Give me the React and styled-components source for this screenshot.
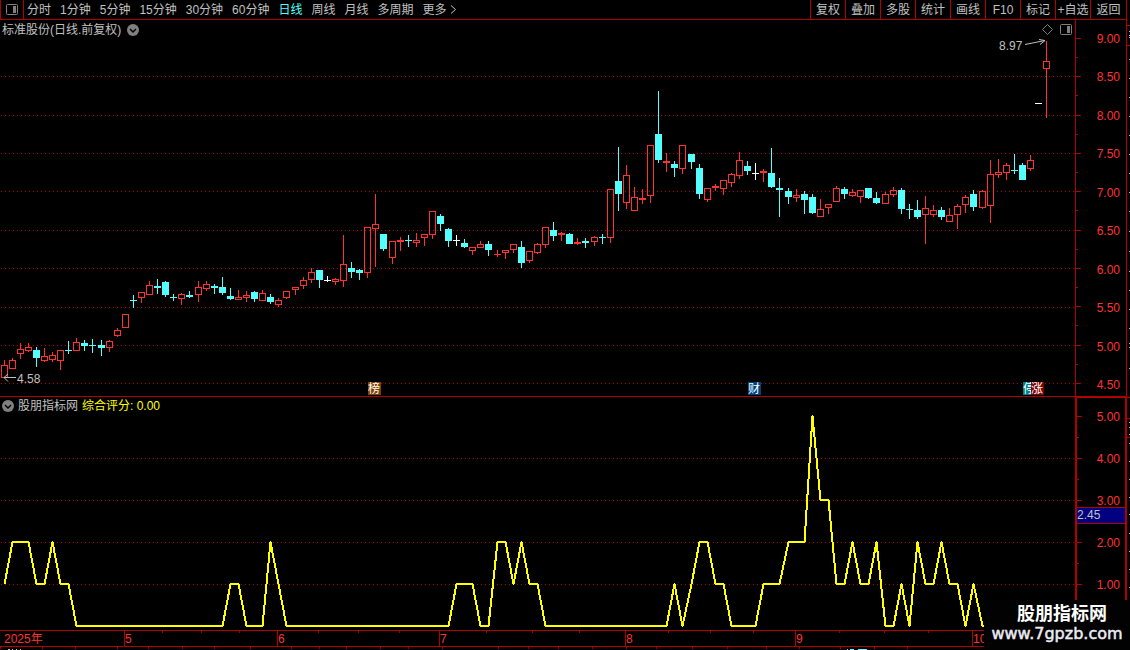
import React from 'react'
import styled, { createGlobalStyle, css } from 'styled-components'

const LINE = '#b00000'
const RED = '#ff3232'
const CYAN = '#54ffff'
const WHITE = '#ffffff'
const GREY = '#c0c0c0'

const GlobalStyle = createGlobalStyle`
* {
box-sizing: border-box;
}
body {
margin: 0;
background: #000;
color: ${GREY};
font-family: "Liberation Sans", "Noto Sans CJK SC", sans-serif;
font-size: 12px;
line-height: 12px;
}
`
const Page = styled.div`
min-height: 100vh;
overflow: hidden;
`
const Upper = styled.div`
display: flex;
`
const Main = styled.main`
flex: 1;
min-width: 0;
`
const Toolbar = styled.nav`
display: flex;
height: 20px;
border: 1px solid ${LINE};
border-width: 0 1px 1px 1px;
`
const buttonReset = css`
border: none;
background: none;
padding: 0;
font: inherit;
color: inherit;
cursor: pointer;
white-space: nowrap;
`
const PanelToggle = styled.button`
${buttonReset}
display: flex;
align-items: center;
justify-content: center;
width: 23px;
border-right: 1px solid ${LINE};
`
const Periods = styled.div`
display: flex;
gap: 9px;
flex: 1;
padding-left: 3px;
`
const Period = styled.button`
${buttonReset}
display: flex;
align-items: center;
gap: 3px;
color: ${({ $active }) => ($active ? CYAN : GREY)};
`
const Action = styled.button`
${buttonReset}
width: 35px;
border-left: 1px solid ${LINE};
&:last-child {
width: 36px;
}
`
const Panel = styled.section`
display: flex;
border-bottom: ${({ $line }) => ($line ? `1px solid ${LINE}` : 'none')};
`
const Plot = styled.div`
flex: 1;
min-width: 0;
`
const PlotHead = styled.header`
display: flex;
align-items: center;
gap: ${({ $gap }) => $gap}px;
height: ${({ $height }) => $height}px;
padding: 1px 3px 0 2px;
`
const Title = styled.h2`
margin: 0;
font-size: 12px;
font-weight: 400;
`
const Score = styled.span`
color: #ffff00;
`
const HeadIcons = styled.div`
display: flex;
align-items: center;
gap: 7px;
margin-left: auto;
`
const IconButton = styled.button`
${buttonReset}
display: flex;
`
const Chart = styled.svg`
display: block;
width: 100%;
height: auto;
font-size: 12px;
`
const Axis = styled.div`
position: relative;
display: flex;
justify-content: space-between;
width: 52px;
color: ${RED};
border: ${({ $thick }) => ($thick ? 2 : 1)}px solid ${LINE};
border-top-width: ${({ $thick }) => ($thick ? 1 : 0)}px;
border-bottom: none;
`
const Ticks = styled.div`
display: flex;
flex-direction: column;
justify-content: space-between;
padding: 18px 0 ${({ $bottom }) => $bottom}px;
`
const Tick = styled.i`
width: ${({ $major }) => ($major ? 5 : 2)}px;
height: 1px;
background: ${LINE};
`
const Labels = styled.div`
display: flex;
flex-direction: column;
justify-content: space-between;
padding: 13px ${({ $right }) => $right}px ${({ $bottom }) => $bottom}px 0;
`
const CursorValue = styled.output`
position: absolute;
top: 109px;
left: 0;
right: 0;
line-height: 15px;
color: ${GREY};
background: #000080;
border: 1px solid ${LINE};
border-width: 1px 0;
`
const SideStrip = styled.svg`
flex: none;
width: 3px;
`
const TimeAxis = styled.div`
display: grid;
grid-template-columns: 124fr 153fr 162fr 186fr 170fr 177fr 158fr;
border: 1px solid ${LINE};
border-width: 1px 0;
color: ${RED};
`
const Month = styled.div`
position: relative;
height: 15px;
line-height: 17px;
padding-left: ${({ $first }) => ($first ? 4 : 0)}px;
border-left: ${({ $first }) => ($first ? 'none' : `1px solid ${LINE}`)};
`
const Weeks = styled.div`
position: absolute;
top: 0;
left: 0;
right: 0;
display: flex;
justify-content: space-evenly;
`
const Week = styled.i`
width: 1px;
height: 2px;
background: ${LINE};
`
const Footer = styled.div`
display: flex;
height: 3px;
`
const FooterTab = styled.div`
flex: ${({ $size }) => $size} 1 0;
height: 2px;
border-left: 1px solid ${LINE};
padding: 0 0 0 6px;
`
const FooterMark = styled.svg`
display: block;
`
const Watermark = styled.aside`
position: fixed;
right: 0;
bottom: 0;
width: 146px;
height: 50px;
padding-top: 4px;
background: #020202;
color: ${WHITE};
text-align: center;
`
const WatermarkName = styled.div`
padding-left: 10px;
font-size: 18px;
font-weight: 700;
line-height: 20px;
`
const WatermarkUrl = styled.div`
font-family: "DejaVu Sans", sans-serif;
font-size: 16px;
line-height: 20px;
color: #ececf4;
-webkit-text-stroke: 0.5px #ececf4;
`

const periods = ['分时', '1分钟', '5分钟', '15分钟', '30分钟', '60分钟', '日线', '周线', '月线', '多周期', '更多']
const actions = ['复权', '叠加', '多股', '统计', '画线', 'F10', '标记', '+自选', '返回']
const prices = ['9.00', '8.50', '8.00', '7.50', '7.00', '6.50', '6.00', '5.50', '5.00', '4.50']
const scoreLabels = ['5.00', '4.00', '3.00', '2.00', '1.00']
const months = ['2025年', '5', '6', '7', '8', '9', '10']
const priceGrid = [76, 115, 153, 191, 230, 268, 307, 345, 383]
const scoreGrid = [458, 500, 542, 584]
const footerTabs = [42, 31, 42, 29, 33, 30, 34, 41, 26, 24, 32, 25, 33, 58, 28, 28, 32, 32, 28, 35, 33, 39, 31, 41, 32, 32, 259]

// kind (r up, c down, w flat), high, low, body top, body bottom
const candles = `
r 360 378 365 378,r 358 369 360 369,r 343 359 349 354,r 343 352 347 351,c 347 367 350 358,r 348 362 356 361
r 352 362 355 360,r 350 370 350 361,c 341 354 350 351,r 338 351 342 351,c 340 351 343 346,c 339 353 345 346
c 340 356 345 348,r 340 352 341 348,r 328 337 330 336,r 314 328 314 328,c 295 308 300 301,r 292 303 292 298
r 281 295 285 295,c 279 294 286 288,c 281 297 282 295,c 294 301 297 298,r 293 305 294 299,c 291 298 295 297
r 281 302 287 295,r 281 291 284 289,c 284 294 286 288,c 277 295 287 293,c 288 300 296 299,r 290 300 297 300
r 291 302 295 298,c 291 302 292 299,r 290 301 293 301,c 294 304 297 302,r 298 307 300 305,r 291 299 291 298
r 287 295 287 290,r 277 289 280 286,r 268 283 272 280,c 270 288 270 280,w 276 282 280 281,r 278 285 279 282
r 235 287 264 281,c 262 278 268 272,c 269 280 270 273,r 227 278 227 273,r 194 267 224 229,c 234 251 234 249
r 241 264 241 258,r 237 251 240 242,c 235 247 240 241,r 233 247 240 243,r 234 246 234 238,r 211 239 211 235
c 214 231 216 224,c 228 247 229 241,w 235 246 240 241,c 239 248 243 247,r 247 255 247 251,r 241 248 244 248
c 241 256 244 250,r 250 257 254 255,r 250 259 250 253,r 244 253 244 250,c 241 268 247 263,r 251 263 251 261
r 243 254 244 253,r 227 248 227 245,c 222 241 230 236,r 232 241 233 235,c 233 244 234 244,r 238 245 242 244
c 238 248 241 243,r 236 246 237 242,c 234 244 237 238,r 189 243 189 238,c 147 211 181 194,r 165 209 175 203
r 187 211 197 211,r 189 204 198 200,r 145 203 145 196,c 91 163 134 160,r 153 172 161 163,c 161 177 164 168
r 145 174 145 169,c 154 169 154 162,c 164 199 168 194,r 188 202 188 200,r 184 191 186 188,r 180 195 180 189
r 173 187 174 183,r 152 179 160 176,c 161 175 166 171,w 163 180 173 174,r 169 182 171 173,c 148 188 173 187
c 178 217 188 190,c 188 204 191 197,r 189 202 195 198,c 191 214 194 200,c 194 214 197 213,r 199 217 209 217
r 204 214 204 208,r 186 202 188 202,c 187 199 189 194,r 189 197 192 196,r 190 203 190 197,c 188 199 188 198
c 192 204 198 203,r 192 204 194 204,r 187 197 190 195,c 188 214 190 209,c 204 219 209 210,c 200 219 210 217
r 196 244 208 215,r 205 217 210 215,c 207 220 210 217,r 208 222 215 222,r 204 229 206 215,r 195 213 197 205
c 190 211 194 207,r 190 209 191 208,r 160 223 174 206,r 159 178 172 175,r 163 180 165 173,c 154 174 170 171
c 163 180 165 180,r 155 171 160 169,w 103 104 103 104,r 41 118 61 69
`.trim().split(/[\n,]/).map((row) => {
    const [kind, ...values] = row.split(' ')
    return [kind, ...values.map(Number)]
})

// [bar index, score], straight lines in between
const scores = [
    [0, 1], [1, 2], [3, 2], [4, 1], [5, 1], [6, 2], [7, 1], [8, 1], [9, 0], [27, 0], [28, 1], [29, 1], [30, 0], [32, 0],
    [33, 2], [34, 1], [35, 0], [55, 0], [56, 1], [58, 1], [59, 0], [60, 0], [61, 2], [62, 2], [63, 1], [64, 2], [65, 1],
    [66, 1], [67, 0], [82, 0], [83, 1], [84, 0], [85, 1], [86, 2], [87, 2], [88, 1], [89, 1], [90, 0], [93, 0], [94, 1],
    [96, 1], [97, 2], [99, 2], [100, 5], [101, 3], [102, 3], [103, 1], [104, 1], [105, 2], [106, 1], [107, 1], [108, 2],
    [109, 0], [110, 0], [111, 1], [112, 0], [113, 2], [114, 1], [115, 1], [116, 2], [117, 1], [118, 1], [119, 0],
    [120, 1], [121, 0], [129, 0],
]

const colors = { r: RED, c: CYAN, w: WHITE }
const barX = (i) => Math.floor(4.055 + i * 8.0823)

function Candle({ index, data }) {
    const [kind, high, low, top, bottom] = data
    const x = barX(index)
    const color = colors[kind]
    const hollow = kind === 'r' && bottom - top > 2

    return (
        <g fill={color}>
            {top > high && <rect x={x} y={high} width="1" height={top - high} />}
            {low > bottom && <rect x={x} y={bottom} width="1" height={low - bottom} />}
            {hollow
                ? <rect x={x - 2.5} y={top + 0.5} width="6" height={bottom - top - 1} fill="none" stroke={color} />
                : <rect x={x - 3} y={top} width="7" height={bottom - top} />}
        </g>
    )
}

function Grid({ lines }) {
    return lines.map((y) => (
        <line key={y} x1="1" x2="1075" y1={y + 0.5} y2={y + 0.5} stroke={LINE} strokeDasharray="1 3" />
    ))
}

function Flag({ x, color, children }) {
    return (
        <g>
            <rect x={x} y="382" width="13" height="13" fill={color} />
            <text x={x} y="393" fill={WHITE}>{children}</text>
        </g>
    )
}

function LayoutIcon({ color = '#808080' }) {
    return (
        <svg width="12" height="12" viewBox="0 0 12 12" fill="none" stroke={color}>
            <rect x="0.5" y="0.5" width="11" height="10" rx="1" />
            <rect x="7" y="2" width="3" height="7" fill={color} stroke="none" />
        </svg>
    )
}

function Dropdown() {
    return (
        <svg width="12" height="12" viewBox="0 0 12 12">
            <circle cx="6" cy="6" r="6" fill="#808080" />
            <path d="M3 5l3 3 3-3" fill="none" stroke="#000" strokeWidth="1.5" />
        </svg>
    )
}

function PriceAxis({ labels, labelBottom, tickBottom, thick, children }) {
    return (
        <Axis $thick={thick}>
            <Ticks $bottom={tickBottom}>
                {Array.from({ length: labels.length * 2 - 1 }, (_, i) => <Tick key={i} $major={i % 2 === 0} />)}
            </Ticks>
            <Labels $bottom={labelBottom} $right={thick ? 5 : 6}>
                {labels.map((label) => <span key={label}>{label}</span>)}
            </Labels>
            {children}
        </Axis>
    )
}

function PricePanel() {
    return (
        <Panel $line>
            <Plot>
                <PlotHead $height={18} $gap={6}>
                    <Title>标准股份(日线.前复权)</Title>
                    <IconButton aria-label="切换股票"><Dropdown /></IconButton>
                    <HeadIcons>
                        <IconButton aria-label="标记">
                            <svg width="11" height="11" viewBox="0 0 11 11" fill="none" stroke="#808080">
                                <path d="M5.5 0.5l5 5-5 5-5-5z" />
                            </svg>
                        </IconButton>
                        <IconButton aria-label="窗口布局"><LayoutIcon /></IconButton>
                    </HeadIcons>
                </PlotHead>
                <Chart viewBox="0 38 1075 358">
                    <g shapeRendering="crispEdges">
                        <Grid lines={priceGrid} />
                        {candles.map((data, i) => <Candle key={i} index={i} data={data} />)}
                    </g>
                    <g fill="none" stroke={GREY}>
                        <path d="M1025 44.5l20-4M1039 39.5l6 1-5 4" />
                        <path d="M16 377.5H4M8 374l-4 3.5 4 4" />
                    </g>
                    <g fill={GREY}>
                        <text x="999" y="50">8.97</text>
                        <text x="17" y="383">4.58</text>
                    </g>
                    <Flag x={368} color="#804000">榜</Flag>
                    <Flag x={748} color="#004080">财</Flag>
                    <Flag x={1023} color="#008080">停</Flag>
                    <Flag x={1031} color="#800000">涨</Flag>
                </Chart>
            </Plot>
            <PriceAxis labels={prices} labelBottom={5} tickBottom={12} />
        </Panel>
    )
}

function ScorePanel() {
    const points = scores.map(([i, value]) => `${barX(i) + 0.5},${626 - value * 42}`).join(' ')

    return (
        <Panel>
            <Plot>
                <PlotHead $height={17} $gap={4}>
                    <IconButton aria-label="切换指标"><Dropdown /></IconButton>
                    <Title>股朋指标网</Title>
                    <Score>综合评分: 0.00</Score>
                </PlotHead>
                <Chart viewBox="0 414 1075 216" shapeRendering="crispEdges">
                    <Grid lines={scoreGrid} />
                    <polyline points={points} fill="none" stroke="#ffff00" strokeWidth="2" strokeLinejoin="round" />
                </Chart>
            </Plot>
            <PriceAxis labels={scoreLabels} labelBottom={39} tickBottom={45} thick>
                <CursorValue>2.45</CursorValue>
            </PriceAxis>
        </Panel>
    )
}

function App() {
    return (
        <Page>
            <GlobalStyle />
            <Upper>
                <Main>
                    <Toolbar>
                        <PanelToggle aria-label="侧栏"><LayoutIcon /></PanelToggle>
                        <Periods>
                            {periods.map((name) => (
                                <Period key={name} $active={name === '日线'}>
                                    {name}
                                    {name === '更多' && (
                                        <svg width="7" height="9" viewBox="0 0 7 9" fill="none" stroke={GREY}>
                                            <path d="M1 0.5l4.5 4-4.5 4" />
                                        </svg>
                                    )}
                                </Period>
                            ))}
                        </Periods>
                        {actions.map((name) => <Action key={name}>{name}</Action>)}
                    </Toolbar>
                    <PricePanel />
                    <ScorePanel />
                </Main>
                <SideStrip viewBox="0 0 3 630" shapeRendering="crispEdges">
                    {[25, 45, 397, 418, 437].map((y) => <rect key={y} y={y} width="3" height="1" fill={LINE} />)}
                    {[31, 35, 37, 59, 78, 97, 116, 135, 154, 173, 192, 211, 231, 251, 271, 290, 309, 328, 343, 347, 368, 422, 427, 434, 443, 461, 479, 497, 514, 533, 551, 569, 587].map((y) => (
                        <rect key={y} x="2" y={y} width="1" height="1" fill={GREY} />
                    ))}
                </SideStrip>
            </Upper>
            <TimeAxis>
                {months.map((month, i) => (
                    <Month key={month} $first={i === 0}>
                        {month}
                        {i > 0 && <Weeks><Week /><Week /><Week /></Weeks>}
                    </Month>
                ))}
            </TimeAxis>
            <Footer>
                {footerTabs.map((size, i) => (
                    <FooterTab key={i} $size={size}>
                        {i === 0 && (
                            <FooterMark width="16" height="3" shapeRendering="crispEdges">
                                <path d="M1 2.5h2M5 2.5h1M9 2.5h1M13 2.5h1" stroke={GREY} />
                            </FooterMark>
                        )}
                        {i === 24 && (
                            <FooterMark width="24" height="3" shapeRendering="crispEdges">
                                <path d="M0 2.5h1M3 2.5h4M11 2.5h9" stroke={CYAN} />
                            </FooterMark>
                        )}
                    </FooterTab>
                ))}
            </Footer>
            <Watermark>
                <WatermarkName>股朋指标网</WatermarkName>
                <WatermarkUrl>www.7gpzb.com</WatermarkUrl>
            </Watermark>
        </Page>
    )
}

export default App
